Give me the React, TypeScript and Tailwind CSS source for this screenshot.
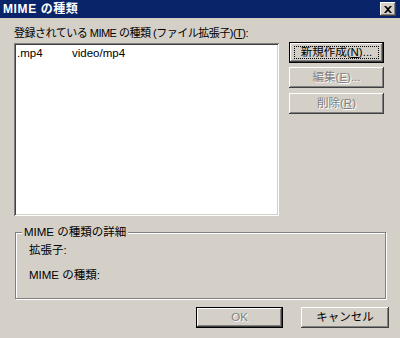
import React from "react";

const raised =
  "shadow-[inset_-1px_-1px_0_#404040,inset_1px_1px_0_#ffffff,inset_-2px_-2px_0_#808080,inset_2px_2px_0_#d4d0c8]";
const raisedDefault =
  "border border-black shadow-[inset_-1px_-1px_0_#404040,inset_1px_1px_0_#ffffff,inset_-2px_-2px_0_#808080]";
const sunken =
  "shadow-[inset_1px_1px_0_#808080,inset_-1px_-1px_0_#ffffff,inset_2px_2px_0_#404040,inset_-2px_-2px_0_#d4d0c8]";

const disabledText = "text-[#808080] [text-shadow:1px_1px_0_#ffffff]";

function Btn({
  children,
  w,
  isDefault,
  disabled,
  focus,
}: {
  children: React.ReactNode;
  w: string;
  isDefault?: boolean;
  disabled?: boolean;
  focus?: boolean;
}) {
  return (
    <div
      className={`${w} h-[21px] flex items-center justify-center bg-[#d4d0c8] ${
        isDefault ? raisedDefault : raised
      } ${disabled ? disabledText : "text-black"}`}
    >
      {focus ? (
        <span className="flex items-center justify-center w-[calc(100%-8px)] h-[13px] border border-dotted border-black leading-none">
          {children}
        </span>
      ) : (
        <span className="leading-none">{children}</span>
      )}
    </div>
  );
}

export default function App() {
  return (
    <div
      className="w-[400px] h-[338px] bg-[#d4d0c8] text-[11.5px] text-black overflow-hidden"
      style={{ fontFamily: '"Liberation Sans", "Noto Sans CJK JP", sans-serif' }}
    >
      {/* title bar */}
      <div className="h-[18px] bg-[#0a246a] flex items-center justify-between pl-[3px] pr-[4px]">
        <span className="text-white font-bold text-[12px] leading-none tracking-[0.6px]">MIME の種類</span>
        <div className={`w-[16px] h-[14px] bg-[#d4d0c8] ${raised} flex items-center justify-center`}>
          <svg width="8" height="7" viewBox="0 0 8 7" aria-hidden>
            <path d="M0 0h2l2 2 2-2h2L5 3.5 8 7H6L4 5 2 7H0l3-3.5z" fill="#000" />
          </svg>
        </div>
      </div>

      <div className="pl-[14px]">
        <div className="mt-[9px] h-[13px] leading-[13px] whitespace-nowrap text-[11px] tracking-[-0.5px]">
          登録されている MIME の種類 (ファイル拡張子)(<span className="underline">T</span>):
        </div>

        <div className="flex items-start mt-[3px]">
          <div className={`w-[265px] h-[173px] bg-white ${sunken} pt-[4px] pl-[3px]`}>
            <div className="flex leading-[13px]">
              <span className="w-[55px]">.mp4</span>
              <span>video/mp4</span>
            </div>
          </div>

          <div className="ml-[10px] -mt-[1px] flex flex-col">
            <Btn w="w-[95px]" isDefault focus>
              新規作成(<span className="underline">N</span>)...
            </Btn>
            <div className="mt-[4px]">
              <Btn w="w-[95px]" disabled>
                編集(<span className="underline">E</span>)...
              </Btn>
            </div>
            <div className="mt-[5px]">
              <Btn w="w-[95px]" disabled>
                削除(<span className="underline">R</span>)
              </Btn>
            </div>
          </div>
        </div>

        {/* group box */}
        <div className="relative ml-[1px] mt-[16px] w-[371px] h-[67px] border border-[#808080] shadow-[inset_1px_1px_0_#ffffff,1px_1px_0_#ffffff] pl-[13px] pt-[11px]">
          <span className="absolute left-[6px] -top-[7px] px-[2px] bg-[#d4d0c8] leading-[13px]">
            MIME の種類の詳細
          </span>
          <div className="leading-[13px]">拡張子:</div>
          <div className="leading-[13px] mt-[12px]">MIME の種類:</div>
        </div>

        <div className="flex mt-[8px] pl-[182px]">
          <Btn w="w-[87px]" isDefault disabled>
            OK
          </Btn>
          <div className="ml-[18px]">
            <Btn w="w-[88px]">キャンセル</Btn>
          </div>
        </div>
      </div>
    </div>
  );
}
